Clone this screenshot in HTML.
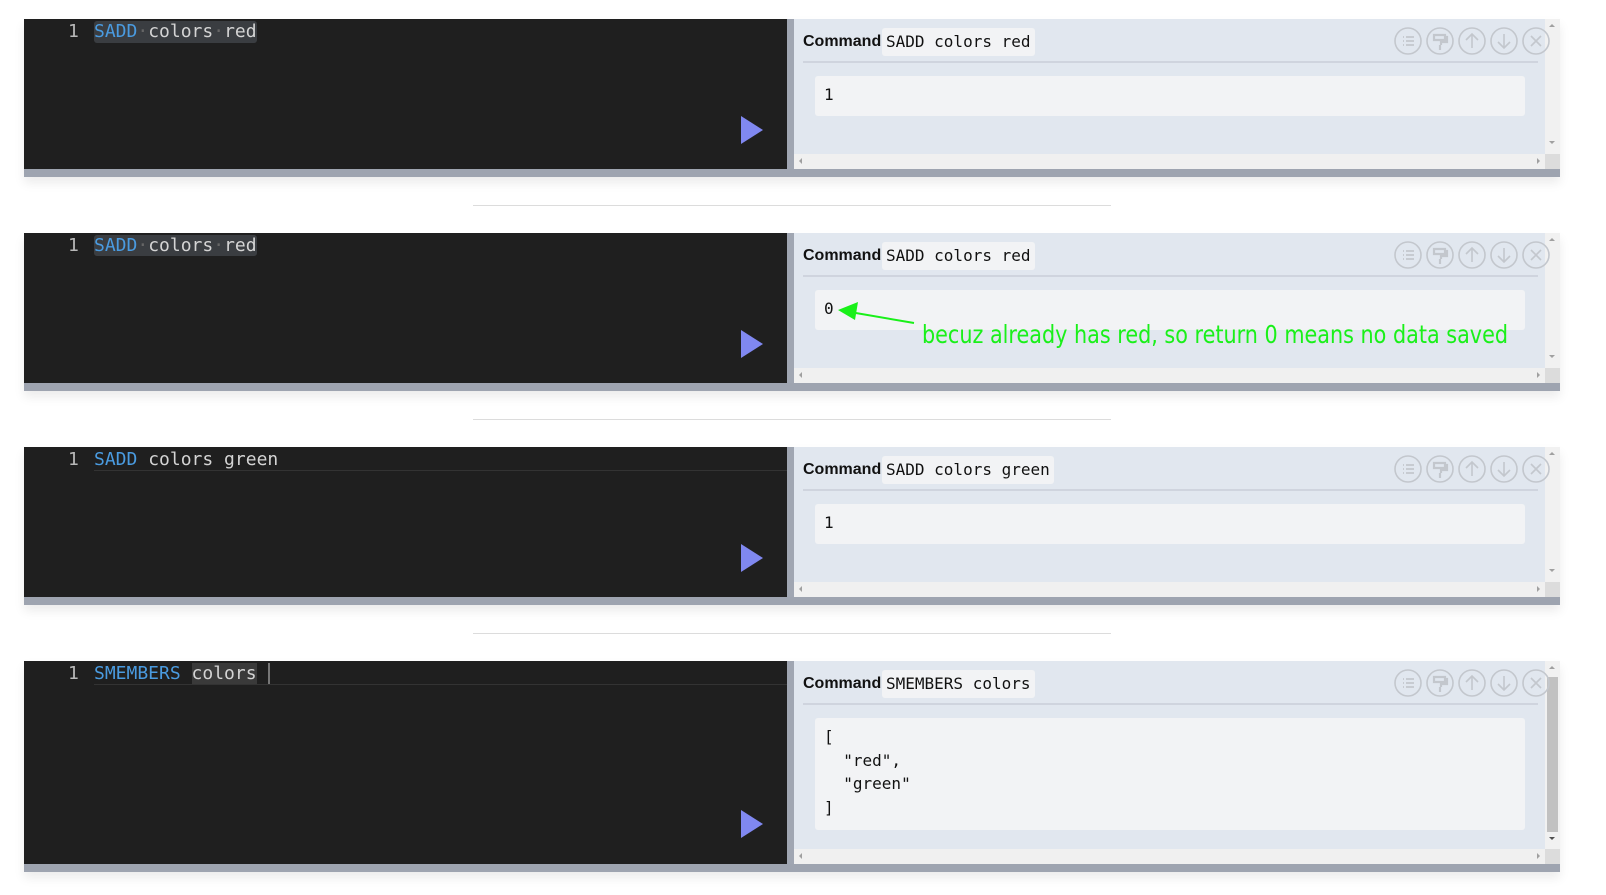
<!DOCTYPE html>
<html><head><meta charset="utf-8">
<style>
*{margin:0;padding:0;box-sizing:border-box}
body{width:1606px;height:895px;background:#fff;position:relative;overflow:hidden;font-family:"Liberation Sans",sans-serif}
.p{position:absolute;left:24px;width:1536px;box-shadow:0 6px 10px rgba(0,0,0,0.08)}
.ed{position:absolute;left:0;top:0;width:763px;background:#1f1f1f}
.dv{position:absolute;left:763px;top:0;width:7px;background:#a0a6b2}
.rs{position:absolute;left:770px;top:0;width:751px;background:#e1e7ef;z-index:2}
.vs{position:absolute;left:1521px;top:0;width:15px;background:#f1f1f1;z-index:1}
.hs{position:absolute;left:770px;width:751px;height:15px;background:#f0f0f0;z-index:3}
.cn{position:absolute;left:1521px;width:15px;height:15px;background:#dcdcdc}
.bb{position:absolute;left:0;width:1536px;height:8px;background:#9ea4b0}
.ln{position:absolute;left:44px;top:2px;font:18px "DejaVu Sans Mono","Liberation Mono",monospace;color:#b8b8b8;line-height:22px}
.code{position:absolute;left:70px;top:2px;font:18px "DejaVu Sans Mono","Liberation Mono",monospace;color:#d4d4d4;line-height:22px;white-space:pre}
.kw{color:#4a9be0}
.sel{background:#3a3d41;border-radius:3px}
.dot{color:#666}
.cmd{position:absolute;left:9px;top:8px;font:bold 16px "Liberation Sans",sans-serif;color:#111;line-height:30px}
.chip{position:absolute;left:88px;top:9px;height:28px;background:#f2f3f5;border-radius:3px;padding:0 4px;font:16px "DejaVu Sans Mono","Liberation Mono",monospace;line-height:28px;color:#111;white-space:pre}
.hl{position:absolute;left:9px;top:42px;width:735px;height:2px;background:#cfd4de}
.box{position:absolute;left:21px;top:57px;width:710px;background:#f2f3f5;border-radius:3px;font:16px "DejaVu Sans Mono","Liberation Mono",monospace;color:#111;white-space:pre;padding:7px 9px;line-height:23.5px}
.ic{position:absolute;top:8px;left:600px;overflow:visible}
.play{position:absolute;left:717px;width:0;height:0;border-top:14px solid transparent;border-bottom:14px solid transparent;border-left:22px solid #8088f0}
.sep{position:absolute;left:473px;width:638px;height:1px;background:#dcdcdc}
.la{position:absolute;left:5px;top:4px;border-top:3.5px solid transparent;border-bottom:3.5px solid transparent;border-right:3.5px solid #a0a0a0}
.ra{position:absolute;right:5px;top:4px;border-top:3.5px solid transparent;border-bottom:3.5px solid transparent;border-left:3.5px solid #a0a0a0}
</style></head><body>

<svg width="0" height="0" style="position:absolute">
<defs>
<g id="icons" fill="none" stroke="#c3c7cd" stroke-width="1.6">
<circle cx="14" cy="14" r="13"/><circle cx="46" cy="14" r="13"/><circle cx="78" cy="14" r="13"/><circle cx="110" cy="14" r="13"/><circle cx="142" cy="14" r="13"/>
<path d="M9 10h1M9 14h1M9 18h1M12 10h8M12 14h8M12 18h8" stroke-width="1.8"/>
<path d="M40 8h11v5h-11zM51 10h2v5h-6v3M46 18v5" stroke-width="2.2"/>
<path d="M78 21V7M72 13l6-6 6 6"/>
<path d="M110 7v14M104 15l6 6 6-6"/>
<path d="M137 9l10 10M147 9l-10 10"/>
</g>
</defs>
</svg>

<!-- Panel 1 -->
<div class="p" style="top:19px;height:158px">
  <div class="ed" style="height:150px">
    <div class="ln">1</div>
    <div class="code"><span class="sel" style="padding:0 0 1px"><span class="kw">SADD</span><span class="dot">·</span>colors<span class="dot">·</span>red</span></div>
    <div class="play" style="top:97px"></div>
  </div>
  <div class="dv" style="height:150px"></div>
  <div class="rs" style="height:135px">
    <div class="cmd">Command</div><div class="chip">SADD colors red</div><div class="hl"></div>
    <div class="box" style="height:40px">1</div>
    <svg class="ic" width="160" height="30"><use href="#icons"/></svg>
  </div>
  <div class="vs" style="height:135px"><div style="position:absolute;left:4px;top:5px;border:3.5px solid transparent;border-bottom-color:#a0a0a0;border-top:0"></div><div style="position:absolute;left:4px;top:122px;border:3.5px solid transparent;border-top-color:#a0a0a0;border-bottom:0"></div></div>
  <div class="hs" style="top:135px"><div class="la"></div><div class="ra"></div></div><div class="cn" style="top:135px"></div>
  <div class="bb" style="top:150px"></div>
</div>
<div class="sep" style="top:205px"></div>

<!-- Panel 2 -->
<div class="p" style="top:233px;height:158px">
  <div class="ed" style="height:150px">
    <div class="ln">1</div>
    <div class="code"><span class="sel"><span class="kw">SADD</span><span class="dot">·</span>colors<span class="dot">·</span>red</span></div>
    <div class="play" style="top:97px"></div>
  </div>
  <div class="dv" style="height:150px"></div>
  <div class="rs" style="height:135px">
    <div class="cmd">Command</div><div class="chip">SADD colors red</div><div class="hl"></div>
    <div class="box" style="height:40px">0</div>
    <svg class="ic" width="160" height="30"><use href="#icons"/></svg>
  </div>
  <div class="vs" style="height:135px"><div style="position:absolute;left:4px;top:5px;border:3.5px solid transparent;border-bottom-color:#a0a0a0;border-top:0"></div><div style="position:absolute;left:4px;top:122px;border:3.5px solid transparent;border-top-color:#a0a0a0;border-bottom:0"></div></div>
  <div class="hs" style="top:135px"><div class="la"></div><div class="ra"></div></div><div class="cn" style="top:135px"></div>
  <div class="bb" style="top:150px"></div>
</div>
<svg style="position:absolute;left:0;top:0;z-index:5" width="1606" height="895">
  <line x1="914" y1="323" x2="850" y2="312" stroke="#19f019" stroke-width="2"/>
  <polygon points="838,310 858,302 855,320" fill="#19f019"/>
  <text x="922" y="343" font-family="DejaVu Sans, Liberation Sans, sans-serif" font-size="25" fill="#19f019" textLength="586" lengthAdjust="spacingAndGlyphs">becuz already has red, so return 0 means no data saved</text>
</svg>
<div class="sep" style="top:419px"></div>

<!-- Panel 3 -->
<div class="p" style="top:447px;height:158px">
  <div class="ed" style="height:150px">
    <div style="position:absolute;left:70px;top:0;width:693px;height:24px;border-bottom:1px solid #333"></div>
    <div class="ln">1</div>
    <div class="code"><span class="kw">SADD</span> colors green</div>
    <div class="play" style="top:97px"></div>
  </div>
  <div class="dv" style="height:150px"></div>
  <div class="rs" style="height:135px">
    <div class="cmd">Command</div><div class="chip">SADD colors green</div><div class="hl"></div>
    <div class="box" style="height:40px">1</div>
    <svg class="ic" width="160" height="30"><use href="#icons"/></svg>
  </div>
  <div class="vs" style="height:135px"><div style="position:absolute;left:4px;top:5px;border:3.5px solid transparent;border-bottom-color:#a0a0a0;border-top:0"></div><div style="position:absolute;left:4px;top:122px;border:3.5px solid transparent;border-top-color:#a0a0a0;border-bottom:0"></div></div>
  <div class="hs" style="top:135px"><div class="la"></div><div class="ra"></div></div><div class="cn" style="top:135px"></div>
  <div class="bb" style="top:150px"></div>
</div>
<div class="sep" style="top:633px"></div>

<!-- Panel 4 -->
<div class="p" style="top:661px;height:211px">
  <div class="ed" style="height:203px">
    <div style="position:absolute;left:70px;top:0;width:693px;height:24px;border-bottom:1px solid #333"></div>
    <div class="ln">1</div>
    <div class="code"><span class="kw">SMEMBERS</span> <span class="sel" style="background:#3a3a3a;border-radius:0">colors</span> <span style="border-left:2px solid #777;margin-left:1px"> </span></div>
    <div class="play" style="top:149px"></div>
  </div>
  <div class="dv" style="height:203px"></div>
  <div class="rs" style="height:188px">
    <div class="cmd">Command</div><div class="chip">SMEMBERS colors</div><div class="hl"></div>
    <div class="box" style="height:112px">[
  "red",
  "green"
]</div>
    <svg class="ic" width="160" height="30"><use href="#icons"/></svg>
  </div>
  <div class="vs" style="height:188px"><div style="position:absolute;left:4px;top:5px;border:3.5px solid transparent;border-bottom-color:#a0a0a0;border-top:0"></div><div style="position:absolute;left:2px;top:16px;width:11px;height:155px;background:#c1c1c1"></div><div style="position:absolute;left:4px;top:176px;border:3.5px solid transparent;border-top-color:#505050;border-bottom:0"></div></div>
  <div class="hs" style="top:188px"><div class="la"></div><div class="ra"></div></div><div class="cn" style="top:188px"></div>
  <div class="bb" style="top:203px"></div>
</div>

</body></html>
